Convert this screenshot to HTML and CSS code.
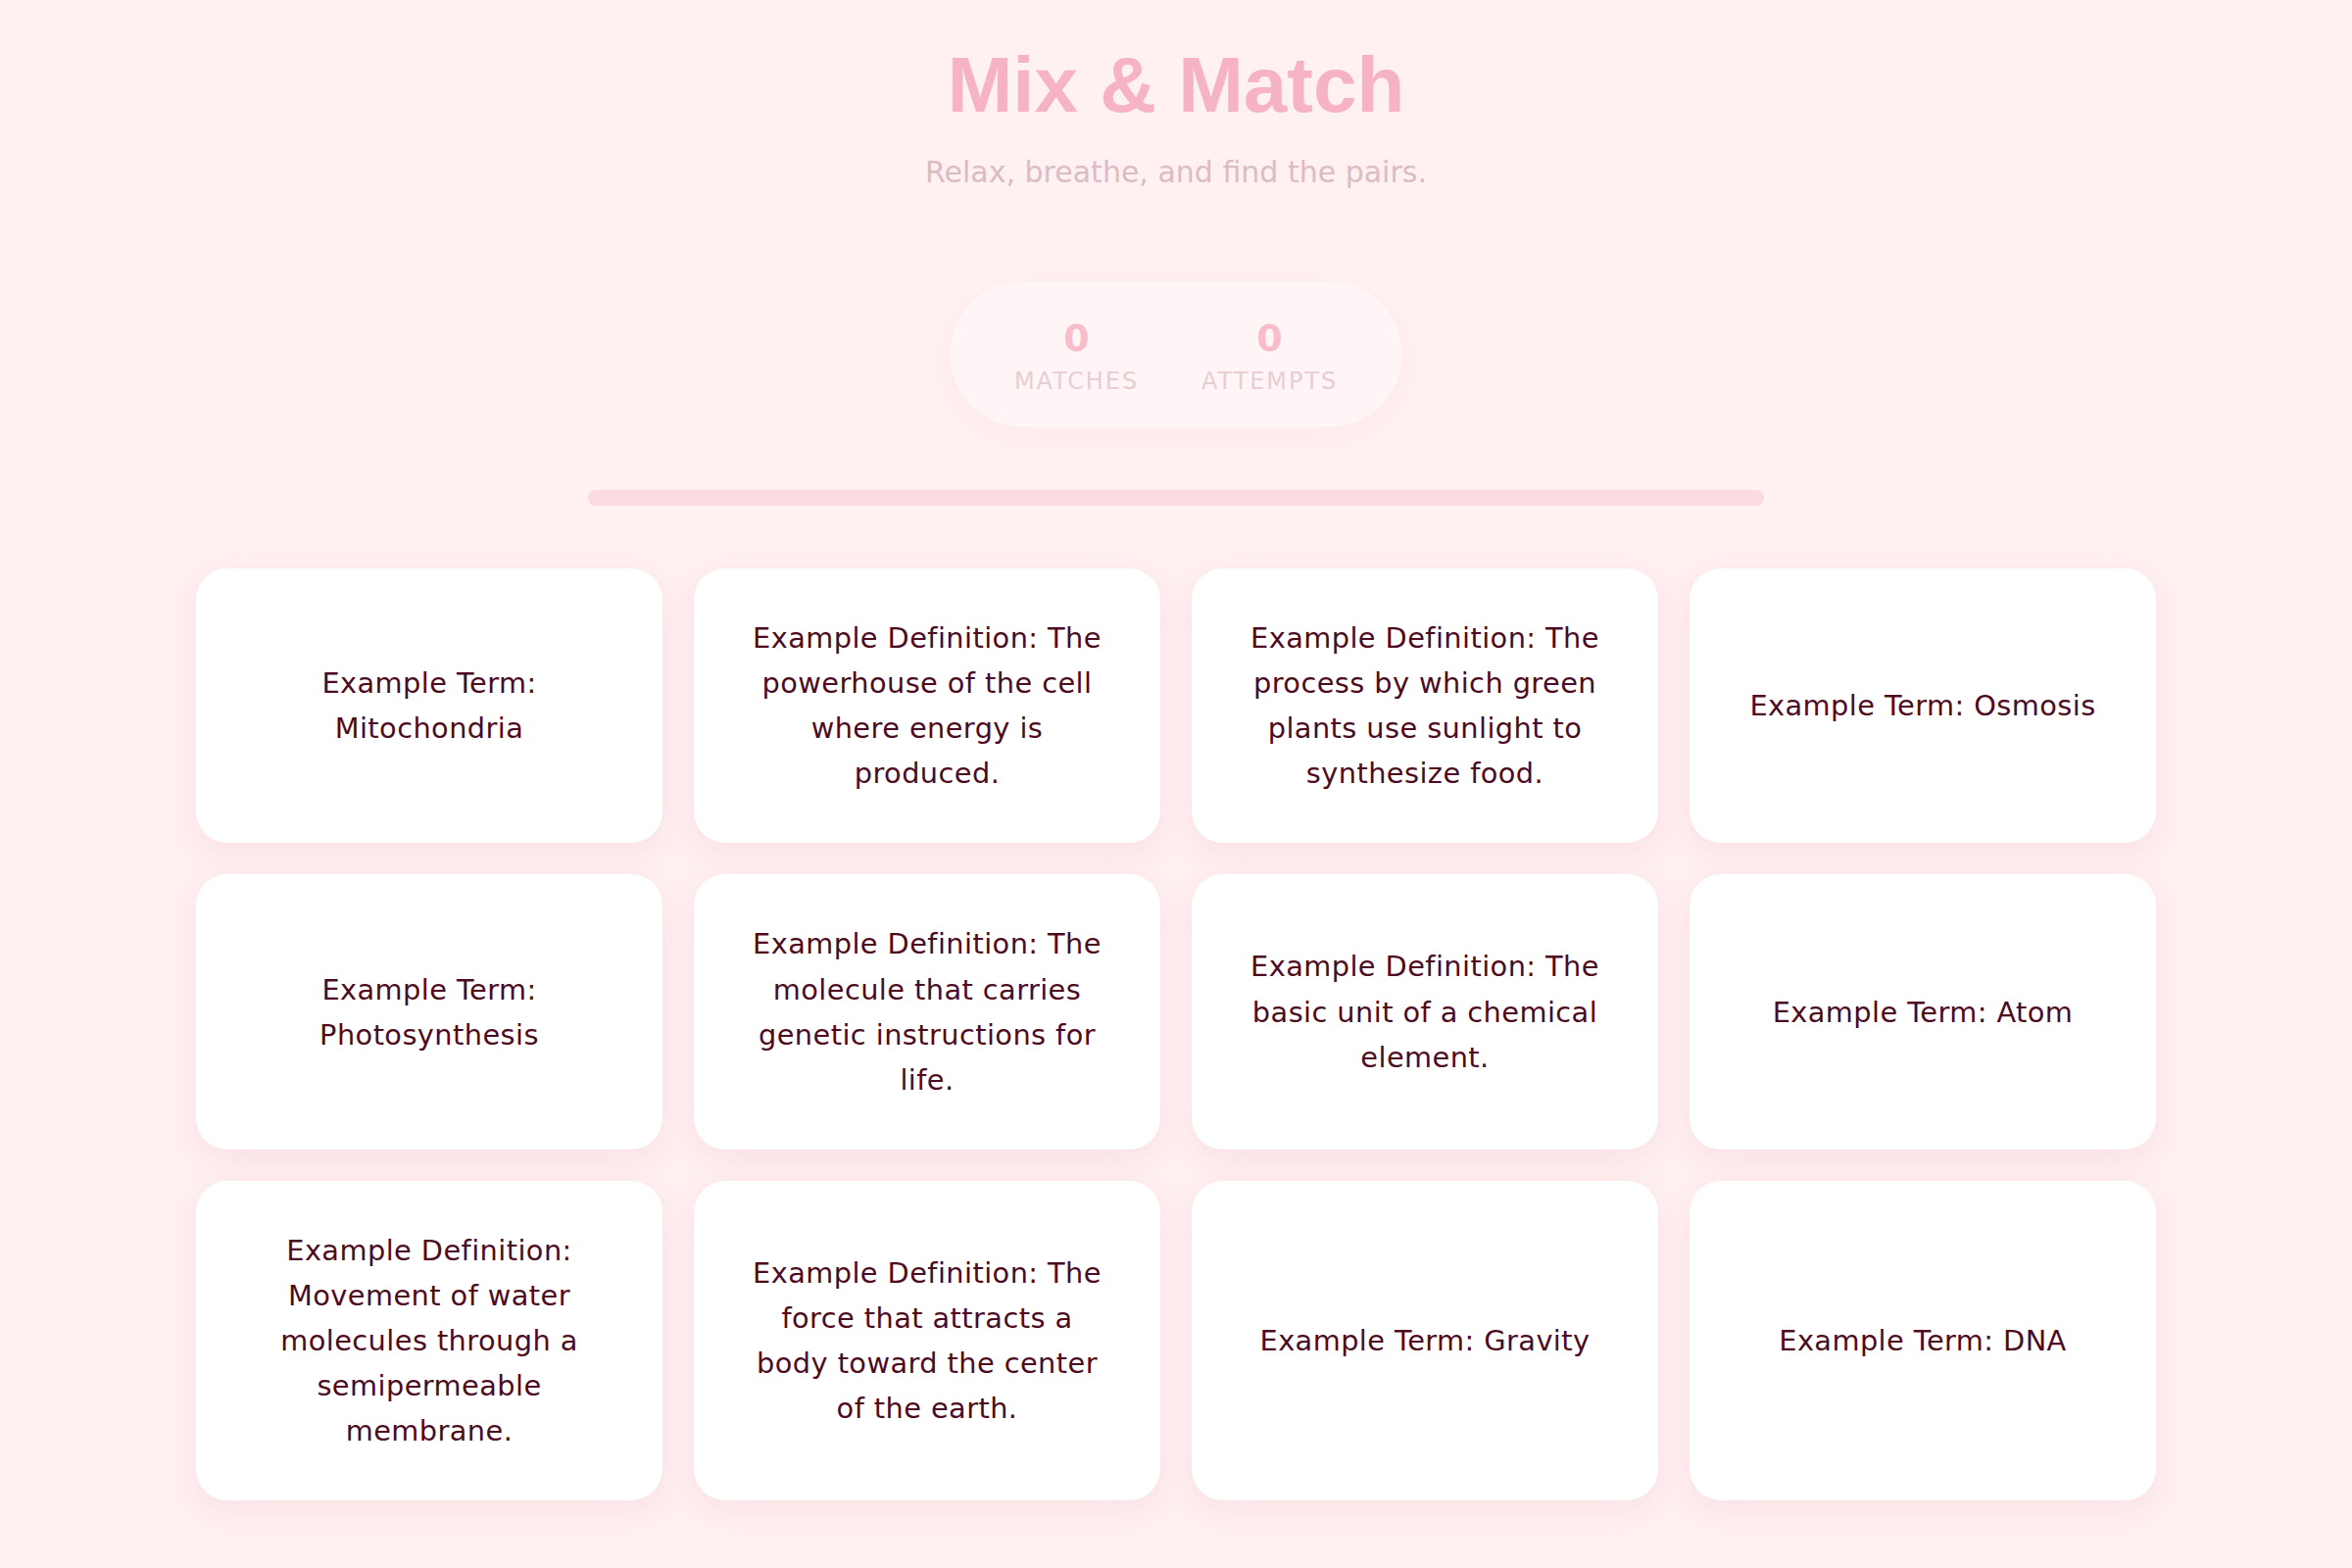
FILE: index.html
```html
<!DOCTYPE html>
<html lang="en">
<head>
  <meta charset="UTF-8">
  <meta name="viewport" content="width=device-width, initial-scale=1.0">
  <title>Mix &amp; Match</title>
  <link rel="stylesheet" href="styles.css">
</head>
<body>
  <header class="intro">
    <h1 class="title">Mix &amp; Match</h1>
    <p class="subtitle">Relax, breathe, and find the pairs.</p>
  </header>

  <div class="stats">
    <div class="stat">
      <span class="stat-value" id="matches">0</span>
      <span class="stat-label">Matches</span>
    </div>
    <div class="stat">
      <span class="stat-value" id="attempts">0</span>
      <span class="stat-label">Attempts</span>
    </div>
  </div>

  <div class="progress">
    <div class="progress-fill" id="progress-fill"></div>
  </div>

  <main class="board" id="board">
    <div class="card" data-pair="mito">Example Term: Mitochondria</div>
    <div class="card" data-pair="mito">Example Definition: The powerhouse of the cell where energy is produced.</div>
    <div class="card" data-pair="photo">Example Definition: The process by which green plants use sunlight to synthesize food.</div>
    <div class="card" data-pair="osmo">Example Term: Osmosis</div>
    <div class="card" data-pair="photo">Example Term: Photosynthesis</div>
    <div class="card" data-pair="dna">Example Definition: The molecule that carries genetic instructions for life.</div>
    <div class="card" data-pair="atom">Example Definition: The basic unit of a chemical element.</div>
    <div class="card" data-pair="atom">Example Term: Atom</div>
    <div class="card" data-pair="osmo">Example Definition: Movement of water molecules through a semipermeable membrane.</div>
    <div class="card" data-pair="grav">Example Definition: The force that attracts a body toward the center of the earth.</div>
    <div class="card" data-pair="grav">Example Term: Gravity</div>
    <div class="card" data-pair="dna">Example Term: DNA</div>
  </main>

  <script>
    // Game state
    let selected = [];
    let matches = 0;
    let attempts = 0;

    const cards = document.querySelectorAll('.card');
    const matchesDisplay = document.getElementById('matches');
    const attemptsDisplay = document.getElementById('attempts');
    const progressFill = document.getElementById('progress-fill');

    cards.forEach((card) => {
      card.addEventListener('click', () => {
        if (card.classList.contains('matched') || selected.includes(card)) return;
        card.classList.add('selected');
        selected.push(card);

        if (selected.length === 2) {
          attempts++;
          const [a, b] = selected;
          if (a.dataset.pair === b.dataset.pair) {
            matches++;
            a.classList.add('matched');
            b.classList.add('matched');
          }
          setTimeout(() => {
            a.classList.remove('selected');
            b.classList.remove('selected');
          }, 400);
          selected = [];
          updateStats();
        }
      });
    });

    // Refresh counters and progress bar
    function updateStats() {
      matchesDisplay.textContent = matches;
      attemptsDisplay.textContent = attempts;
      progressFill.style.width = (matches / (cards.length / 2)) * 100 + '%';
    }
  </script>
</body>
</html>
```

FILE: styles.css
```css
body {
  font-family: "DejaVu Sans", sans-serif;
  background-color: #fff0f1;
  color: #4c0b1e;
  margin: 0;
  padding: 47px 200px 40px;
  display: flex;
  flex-direction: column;
  align-items: center;
}
.intro {
  text-align: center;
}
.title {
  font-family: "Liberation Sans", Arial, sans-serif;
  font-size: 80px;
  font-weight: 700;
  line-height: 1;
  color: #f6b3c4;
  margin: 0;
}
.subtitle {
  font-size: 30px;
  line-height: 1.5;
  color: #dcbcc4;
  margin: 26px 0 0;
}
.stats {
  display: flex;
  gap: 64px;
  margin-top: 89px;
  padding: 36px 66px 30px;
  background-color: #fff5f6;
  border-radius: 999px;
  box-shadow: 0 8px 24px rgba(245, 190, 200, 0.12);
}
.stat {
  display: flex;
  flex-direction: column;
  align-items: center;
}
.stat-value {
  font-size: 38px;
  font-weight: 700;
  line-height: 1.2;
  color: #f8bccb;
}
.stat-label {
  font-size: 24px;
  line-height: 1.4;
  letter-spacing: 0.08em;
  text-transform: uppercase;
  color: #e8cdd4;
  margin-top: 4px;
}
.progress {
  width: 1200px;
  height: 16px;
  margin-top: 64px;
  background-color: #fbdbe1;
  border-radius: 8px;
  overflow: hidden;
}
.progress-fill {
  width: 0;
  height: 100%;
  background-color: #f6b3c4;
  transition: width 0.4s;
}
.board {
  width: 100%;
  max-width: 2000px;
  margin-top: 64px;
  display: grid;
  grid-template-columns: repeat(4, 1fr);
  gap: 32px;
}
.card {
  display: flex;
  align-items: center;
  justify-content: center;
  text-align: center;
  padding: 48px 52px;
  font-size: 28.8px;
  line-height: 1.6;
  letter-spacing: 0.015em;
  background-color: #ffffff;
  border-radius: 32px;
  box-shadow: 0 10px 30px rgba(232, 180, 190, 0.25);
  cursor: pointer;
  transition: transform 0.2s, box-shadow 0.2s;
}
.card:hover {
  transform: translateY(-2px);
}
.card.selected {
  box-shadow: 0 0 0 4px #f6b3c4;
}
.card.matched {
  background-color: #fde4ea;
  color: #b88a96;
}
```
